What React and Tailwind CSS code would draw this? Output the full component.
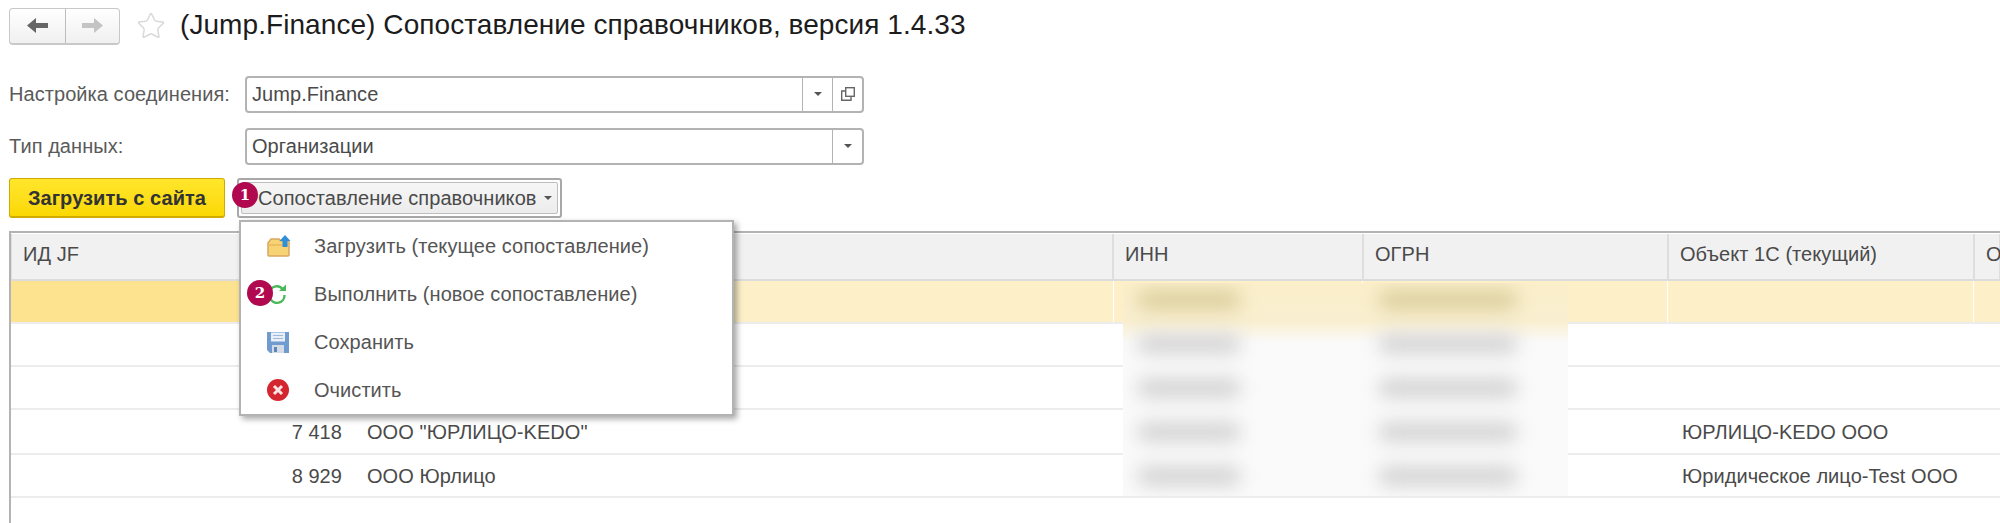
import { Star } from 'lucide-react';

const columns = [
    { key: 'id', title: 'ИД JF', className: 'w-[344px] shrink-0' },
    { key: 'name', title: '', className: 'w-[758px] shrink-0' },
    { key: 'inn', title: 'ИНН', className: 'w-[250px] shrink-0' },
    { key: 'ogrn', title: 'ОГРН', className: 'w-[305px] shrink-0' },
    { key: 'obj', title: 'Объект 1С (текущий)', className: 'w-[306px] shrink-0' },
    { key: 'next', title: 'О', className: 'flex-1 min-w-0' },
];

const rows = [
    { h: 'h-[43px]', active: true },
    { h: 'h-[43px]' },
    { h: 'h-[43px]' },
    { h: 'h-[45px]', id: '7 418', name: 'ООО "ЮРЛИЦО-KEDO"', obj: 'ЮРЛИЦО-KEDO ООО' },
    { h: 'h-[43px]', id: '8 929', name: 'ООО Юрлицо', obj: 'Юридическое лицо-Test ООО' },
];

const Caret = () => (
    <span className="block w-0 h-0 border-x-[4px] border-x-transparent border-t-[4px] border-t-[#555]" />
);

const NavArrow = ({ color, flip }) => (
    <svg width="21" height="15" viewBox="0 0 21 15" className={flip ? 'rotate-180' : ''}>
        <path d="M0 7.5 L9 0 V5 H21 V10 H9 V15 Z" fill={color} />
    </svg>
);

const FolderIcon = () => (
    <svg width="24" height="22" viewBox="0 0 24 22">
        <path d="M1 8 L4 4 H12 L14 6 H22 V20 a1 1 0 0 1 -1 1 H2 a1 1 0 0 1 -1 -1 Z" fill="#f8d374" stroke="#d9a760" strokeWidth="1.5" />
        <path d="M1 10 H22" stroke="#e8b85e" strokeWidth="1.5" />
        <path d="M18 0 L23.5 6 H20.5 V12 H15.5 V6 H12.5 Z" fill="#2f8fd8" />
    </svg>
);

const RefreshIcon = () => (
    <svg width="20" height="20" viewBox="0 0 20 20" fill="none">
        <path d="M15.5 5 A7.5 7.5 0 0 0 3 6.5" stroke="#4bb85a" strokeWidth="2.4" />
        <path d="M12 7 H19 V0.5 Z" fill="#4bb85a" />
        <path d="M17.5 11 A7.5 7.5 0 0 1 3 14" stroke="#4bb85a" strokeWidth="2.4" />
        <path d="M2.5 10 A7.5 7.5 0 0 0 3 14" stroke="#4bb85a" strokeWidth="2.4" />
    </svg>
);

const SaveIcon = () => (
    <svg width="22" height="22" viewBox="0 0 22 22">
        <path d="M0 1 H22 V22 H3 L0 19 Z" fill="#6f9bcf" />
        <rect x="4" y="1.5" width="14" height="9" fill="#e8eff8" />
        <path d="M6 4.5 H16 M6 7.5 H16" stroke="#9db8d8" strokeWidth="1" />
        <rect x="5" y="14" width="12" height="8" fill="#d3dce6" />
        <rect x="7" y="16" width="3" height="5" fill="#5c86b8" />
    </svg>
);

const ClearIcon = () => (
    <svg width="22" height="22" viewBox="0 0 22 22">
        <circle cx="11" cy="11" r="11" fill="#d3262e" />
        <path d="M7 7 L15 15 M15 7 L7 15" stroke="#fbe4e4" strokeWidth="3" />
    </svg>
);

const Badge = ({ n, className }) => (
    <span className={`absolute z-30 flex items-center justify-center w-[26px] h-[26px] rounded-full bg-[#b0094f] text-white text-[15px] font-bold font-['DejaVu_Serif',serif] ${className}`}>
        {n}
    </span>
);

const MenuItem = ({ icon, label }) => (
    <div className="flex items-center h-[48px]">
        <span className="w-[73px] pl-[26px] flex justify-start shrink-0">{icon}</span>
        <span>{label}</span>
    </div>
);

const FormRow = ({ label, value, copy, className = '' }) => (
    <div className={`flex items-center h-[36px] ${className}`}>
        <span className="w-[245px] pl-[9px] shrink-0 text-[#5a5a5a]">{label}</span>
        <div className="flex w-[619px] h-[37px] border-2 border-[#b3b3b3] rounded-[4px] bg-white">
            <span className="flex-1 pl-[5px] flex items-center text-[#4a4a4a]">{value}</span>
            <span className="w-[30px] border-l border-[#b3b3b3] flex items-center justify-center"><Caret /></span>
            {copy && (
                <span className="w-[30px] border-l border-[#b3b3b3] flex items-center justify-center">
                    <svg width="14" height="14" viewBox="0 0 14 14" fill="none" stroke="#666" strokeWidth="1.4">
                        <rect x="4.7" y="0.7" width="8.6" height="8.6" />
                        <path d="M4 4 H0.7 V13.3 H10 V10" />
                    </svg>
                </span>
            )}
        </div>
    </div>
);

const BlurLine = ({ className }) => <div className={`h-[20px] mt-[7px] rounded-full blur-[9px] ${className}`} />;

const App = () => {
    return (
        <div className="relative h-[523px] w-[2000px] overflow-hidden bg-white font-['Liberation_Sans',sans-serif] text-[20px] tracking-[0.06px] text-[#4a4a4a]">
            {/* Title bar */}
            <div className="flex items-center h-[51px] pl-[9px] pt-[1px]">
                <div className="flex w-[111px] h-[37px] border border-[#c8c8c8] border-b-2 rounded-[4px] bg-gradient-to-b from-white to-[#f0f0f0]">
                    <span className="w-[56px] border-r border-[#bdbdbd] flex items-center justify-center">
                        <NavArrow color="#666" />
                    </span>
                    <span className="flex-1 flex items-center justify-center">
                        <NavArrow color="#c4c4c4" flip />
                    </span>
                </div>
                <Star size={30} color="#d9d9d9" strokeWidth={1.2} className="ml-[16px]" />
                <h1 className="ml-[14px] pb-[2px] text-[28px] tracking-[0.07px] leading-none text-[#1c1c1c]">(Jump.Finance) Сопоставление справочников, версия 1.4.33</h1>
            </div>

            {/* Form */}
            <FormRow label="Настройка соединения:" value="Jump.Finance" copy className="mt-[25px]" />
            <FormRow label="Тип данных:" value="Организации" className="mt-[16px]" />

            {/* Buttons */}
            <div className="flex items-center gap-[12px] pl-[9px] mt-[14px] h-[40px]">
                <button className="w-[216px] h-[40px] rounded-[3px] border border-[#d0ab00] border-b-2 bg-gradient-to-b from-[#ffe62a] to-[#fbd800] font-bold text-[#333] text-[20px]">
                    Загрузить с сайта
                </button>
                <div className="w-[325px] h-[40px] rounded-[3px] border-2 border-[#a8a8a8] p-[2px]">
                    <button className="flex items-center w-full h-full pl-[16px] border border-[#bdbdbd] rounded-[2px] bg-gradient-to-b from-[#f6f6f6] to-[#ececec] text-[#4a4a4a] text-[20px]">
                        Сопоставление справочников
                        <span className="ml-[7px]"><Caret /></span>
                    </button>
                </div>
            </div>

            {/* Table */}
            <div className="ml-[9px] mt-[13px] h-[292px] border-l-2 border-t-2 border-[#b3b3b3]">
                <div className="flex h-[48px] pt-[1px] border-b-2 border-[#dcdcdc]">
                    {columns.map((c) => (
                        <div key={c.key} className={`${c.className} flex items-center pl-[11px] pb-[5px] bg-[#f1f1f1] border-x border-[#dedede] text-[#4a4a4a]`}>
                            {c.title}
                        </div>
                    ))}
                </div>
                {rows.map((r, i) => (
                    <div key={i} className={`flex ${r.h} border-b-2 border-[#ececec]`}>
                        <div className={`w-[344px] flex items-center justify-end pr-[13px] ${r.active ? 'bg-[#fde28f]' : ''}`}>{r.id}</div>
                        <div className={`w-[758px] flex items-center pl-[12px] ${r.active ? 'bg-[#fdf0c9]' : ''}`}>{r.name}</div>
                        <div className={`w-[250px] ${r.active ? 'bg-[#fdf0c9] border-x border-white' : ''}`} />
                        <div className={`w-[305px] ${r.active ? 'bg-[#fdf0c9] border-r border-white' : ''}`} />
                        <div className={`w-[306px] flex items-center pl-[14px] ${r.active ? 'bg-[#fdf0c9] border-r border-white' : ''}`}>{r.obj}</div>
                        <div className={`flex-1 ${r.active ? 'bg-[#fdf0c9]' : ''}`} />
                    </div>
                ))}
            </div>

            {/* Blurred INN / OGRN values */}
            <div className="absolute left-[1123px] top-[283px] w-[445px] h-[213px] overflow-hidden bg-[linear-gradient(to_bottom,#fbefca_0%,#f9efd0_18%,#fafafa_28%,#fafafa_100%)] grid grid-cols-[235px_1fr] auto-rows-[44px] items-start">
                {[0, 1, 2, 3, 4].map((i) => (
                    <div key={i} className="contents">
                        <BlurLine className={`ml-[14px] w-[104px] ${i === 0 ? 'bg-[#dccf9f]' : 'bg-[#d4d4d4]'}`} />
                        <BlurLine className={`ml-[20px] w-[140px] ${i === 0 ? 'bg-[#dccf9f]' : 'bg-[#d4d4d4]'}`} />
                    </div>
                ))}
            </div>

            {/* Dropdown menu */}
            <div className="absolute z-20 left-[239px] top-[220px] w-[495px] h-[196px] bg-white border-2 border-[#b3b3b3] shadow-[3px_3px_6px_rgba(0,0,0,0.35)] text-[#555]">
                <MenuItem icon={<FolderIcon />} label="Загрузить (текущее сопоставление)" />
                <MenuItem icon={<RefreshIcon />} label="Выполнить (новое сопоставление)" />
                <MenuItem icon={<SaveIcon />} label="Сохранить" />
                <MenuItem icon={<ClearIcon />} label="Очистить" />
            </div>

            <Badge n="1" className="left-[232px] top-[182px]" />
            <Badge n="2" className="left-[247px] top-[280px]" />
        </div>
    );
};

export default App;
